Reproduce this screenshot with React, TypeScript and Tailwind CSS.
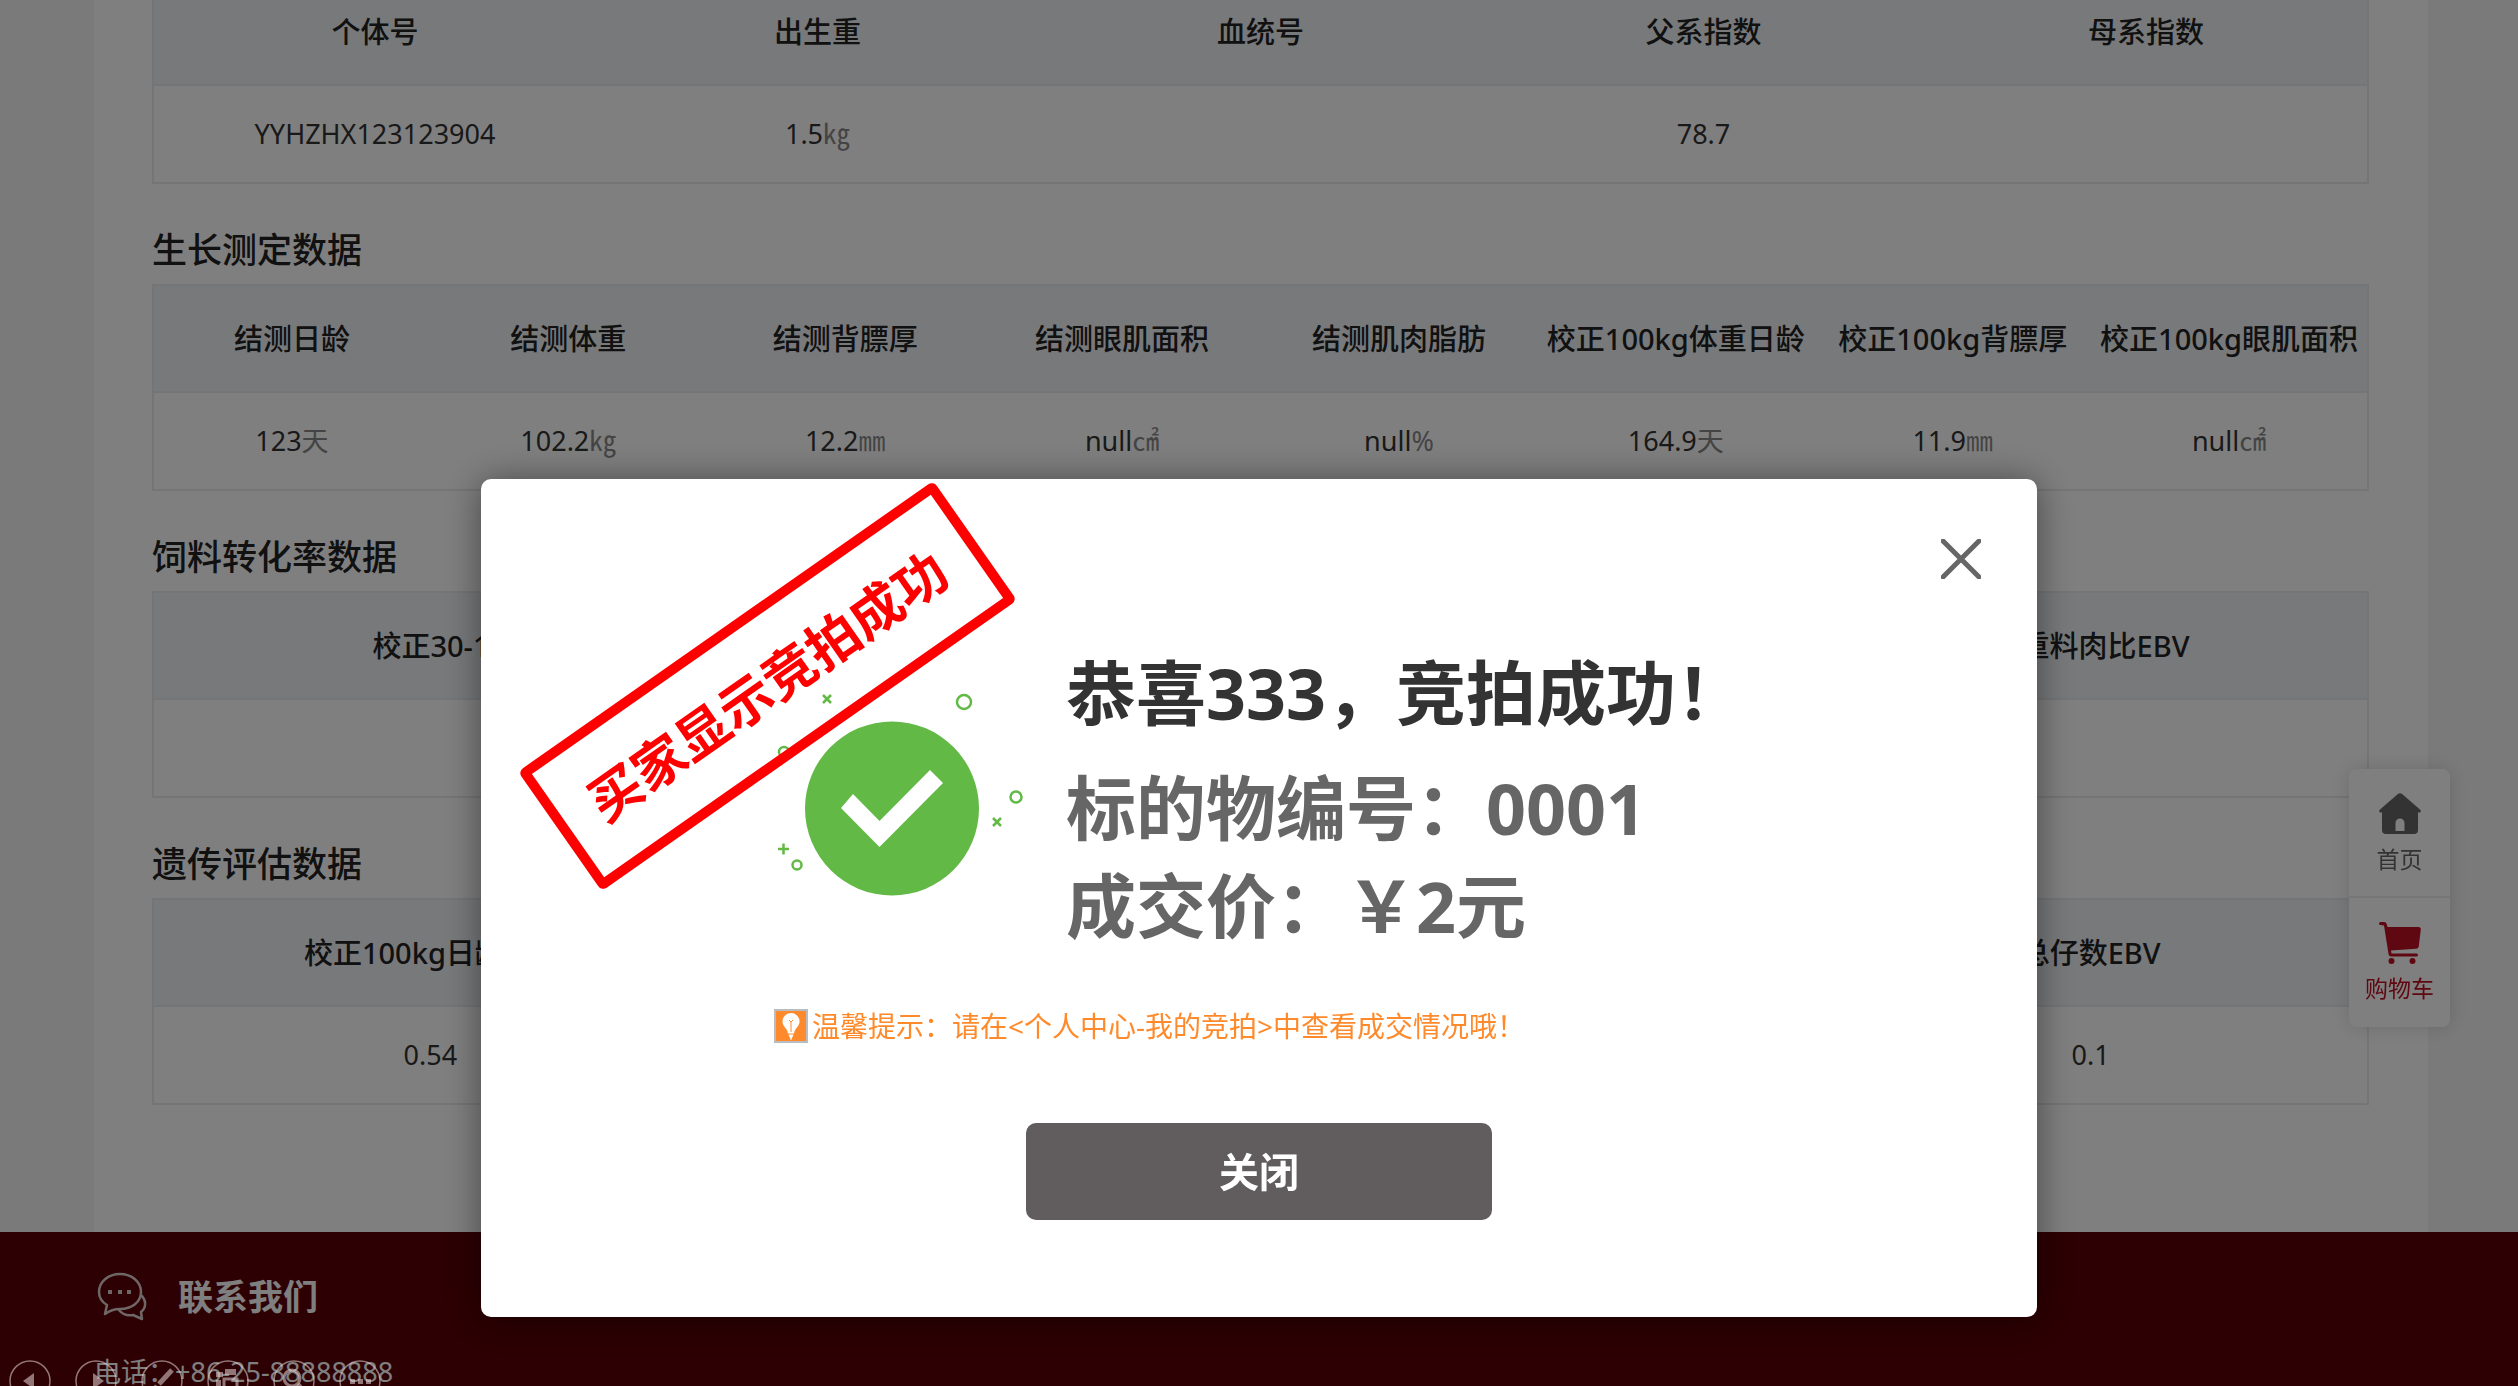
import { useState } from "react";

type Cell = { value: string; unit?: string };

type DataTable = {
  title?: string;
  headers: string[];
  cells: Cell[];
};

const tables: DataTable[] = [
  {
    headers: ["个体号", "出生重", "血统号", "父系指数", "母系指数"],
    cells: [
      { value: "YYHZHX123123904" },
      { value: "1.5", unit: "㎏" },
      { value: "" },
      { value: "78.7" },
      { value: "" },
    ],
  },
  {
    title: "生长测定数据",
    headers: [
      "结测日龄",
      "结测体重",
      "结测背膘厚",
      "结测眼肌面积",
      "结测肌肉脂肪",
      "校正100kg体重日龄",
      "校正100kg背膘厚",
      "校正100kg眼肌面积",
    ],
    cells: [
      { value: "123", unit: "天" },
      { value: "102.2", unit: "㎏" },
      { value: "12.2", unit: "㎜" },
      { value: "null", unit: "㎠" },
      { value: "null", unit: "%" },
      { value: "164.9", unit: "天" },
      { value: "11.9", unit: "㎜" },
      { value: "null", unit: "㎠" },
    ],
  },
  {
    title: "饲料转化率数据",
    headers: ["校正30-100kg体重料比", "料肉比", "校正30-100kg体重料肉比EBV"],
    cells: [{ value: "" }, { value: "" }, { value: "" }],
  },
  {
    title: "遗传评估数据",
    headers: ["校正100kg日龄EBV", "背膘厚EBV", "眼肌面积EBV", "总仔数EBV"],
    cells: [{ value: "0.54" }, { value: "" }, { value: "" }, { value: "0.1" }],
  },
];

function DataSection({ title, headers, cells }: DataTable) {
  return (
    <section>
      {title && (
        <h2 className="h-[100px] pt-10 text-[35px] leading-[52px] font-medium text-[#222]">{title}</h2>
      )}
      <table className="w-full table-fixed border-collapse border-2 border-[#e7eaec] text-center text-[#333]">
        <thead className="bg-[#f0f3f7] text-[29px] text-[#222]">
          <tr className="h-[107px] border-b-2 border-[#e7eaec]">
            {headers.map((h) => (
              <th key={h} className="font-medium whitespace-nowrap">{h}</th>
            ))}
          </tr>
        </thead>
        <tbody className="text-[27px]">
          <tr className="h-[98px]">
            {cells.map((c, i) => (
              <td key={i}>
                {c.value}
                {c.unit && <span className="text-[#888]">{c.unit}</span>}
              </td>
            ))}
          </tr>
        </tbody>
      </table>
    </section>
  );
}

function SideNav() {
  return (
    <nav className="fixed top-[769px] right-[68px] w-[101px] rounded-lg bg-white text-[23px] leading-6 shadow-[0_0_20px_rgba(0,0,0,0.15)]">
      <a href="#home" className="flex h-[129px] flex-col items-center gap-3 border-b-2 border-[#ececec] pt-6 text-[#666]">
        <svg viewBox="0 0 42 42" className="size-[42px]" fill="currentColor">
          <path d="M18.6 1.2a3.6 3.6 0 0 1 4.8 0L41 16.4c1.6 1.5.7 3.2-1.2 3.2H39V37a4 4 0 0 1-4 4H7a4 4 0 0 1-4-4V19.600H2.200C.3 19.600-.6 17.900 1 16.400ZM16.500 38h9V30a4.500 4.500 0 0 0-9 0Z" fillRule="evenodd" />
        </svg>
        首页
      </a>
      <a href="#cart" className="flex h-[129px] flex-col items-center gap-3 pt-6 text-[#c01122]">
        <svg viewBox="0 0 42 42" className="size-[42px]" fill="currentColor">
          <path d="M1.500 0H5a3 3 0 0 1 2.800 2.200L8.500 5H39.500c1.600 0 2.500 1 2.300 2.500L39.800 24c-.2 1.600-1.200 2.600-2.800 2.800L12 28.500l.5 3H37.500a1.500 1.500 0 0 1 0 3H12a2.500 2.500 0 0 1-2.400-2L5 3.500 1.500 3a1.500 1.500 0 0 1 0-3Z" />
          <circle cx="12.500" cy="39" r="3" />
          <circle cx="33.500" cy="39" r="3" />
        </svg>
        购物车
      </a>
    </nav>
  );
}

function Footer() {
  return (
    <footer className="h-[300px] bg-[#5a0006] pt-[34px] pl-[94px] text-white">
      <div className="flex items-center gap-7">
        <svg viewBox="0 0 56 52" className="h-[52px] w-14" fill="none" stroke="currentColor" strokeWidth="2.500" strokeLinejoin="round" opacity="0.8">
          <path d="M11 43l2-9C8 31 5 26 5 21 5 11 14 3 26 3s21 8 21 18-9 17-21 17c-5 0-11 2-15 5Z" />
          <path d="M47 24c6 6 5 13 0 17l1 7-9-4c-5 1-11-1-15-6" />
          <path d="M16 19v4M26 19v4M35 19v4" strokeWidth="4" />
        </svg>
        <h3 className="text-[35px] leading-[62px] font-bold">联系我们</h3>
      </div>
      <p className="pt-4 text-[27px] leading-[56px]">电话：+86-25-88888888</p>
    </footer>
  );
}

const slideTools = [
  { label: "上一张", icon: <path d="M14 21l11-8v16z" fill="currentColor" /> },
  { label: "下一张", icon: <path d="M29 21l-11-8v16z" fill="currentColor" /> },
  { label: "画笔", icon: <path d="M31 10L18 24M16 26l-4 5" stroke="currentColor" strokeWidth="5" /> },
  {
    label: "所有幻灯片",
    icon: (
      <>
        <path d="M9 12h7v5H9zM18 9h11v6H18zM9 20h5v10H9z" fill="currentColor" />
        <path d="M17 19h13v12H17z" fill="none" stroke="currentColor" strokeWidth="3" />
      </>
    ),
  },
  {
    label: "放大",
    icon: (
      <>
        <circle cx="19" cy="18" r="8" fill="none" stroke="currentColor" strokeWidth="3" />
        <path d="M25 24l7 8" stroke="currentColor" strokeWidth="4" />
      </>
    ),
  },
  {
    label: "更多",
    icon: <path d="M11 19h5v5h-5zM19 19h5v5h-5zM27 19h5v5h-5z" fill="currentColor" />,
  },
];

function SlideToolbar() {
  return (
    <div className="fixed -bottom-4 left-[9px] flex gap-6 text-[#e8d8d8]/55">
      {slideTools.map((t) => (
        <button key={t.label} aria-label={t.label} className="size-[42px]">
          <svg viewBox="0 0 42 42">
            <circle cx="21" cy="21" r="20" fill="none" stroke="currentColor" strokeWidth="1.500" />
            {t.icon}
          </svg>
        </button>
      ))}
    </div>
  );
}

function SuccessMark() {
  return (
    <svg viewBox="0 0 248 208" className="mt-[46px] h-[208px] w-[248px]" fill="none" stroke="#62b946" strokeWidth="2.500">
      <circle cx="116" cy="118.500" r="87" fill="#62b946" stroke="none" />
      <path d="M65 118l12-14 26.500 27L154 80l13 13-63.500 64z" fill="#fff" stroke="none" />
      <circle cx="188" cy="12" r="7" />
      <circle cx="240" cy="107" r="5.500" />
      <circle cx="21" cy="175" r="4.500" />
      <circle cx="8" cy="62" r="5" />
      <path d="M47 5l8 8M55 5l-8 8M217 128l8 8M225 128l-8 8M2 159h11M7.500 153.500v11" />
    </svg>
  );
}

function ResultDialog({ onClose }: { onClose: () => void }) {
  return (
    <div
      role="dialog"
      aria-modal="true"
      className="relative mx-auto mt-[479px] w-[1556px] rounded-[10px] bg-white pt-[165px] pb-[97px] pl-[295px] shadow-[0_2px_36px_rgba(0,0,0,0.45)]"
    >
      <button aria-label="关闭窗口" onClick={onClose} className="absolute top-[60px] right-14 text-[#666]">
        <svg viewBox="0 0 40 40" className="size-10" stroke="currentColor" strokeWidth="5" strokeLinecap="round">
          <path d="M2 2l36 36M38 2L2 38" />
        </svg>
      </button>

      <div className="flex items-start gap-[42px]">
        <SuccessMark />
        <div className="text-[70px] leading-[98px] font-bold text-[#666]">
          <h1 className="mb-[17px] text-[#333]">恭喜333，竞拍成功！</h1>
          <p>标的物编号：0001</p>
          <p>成交价：￥2元</p>
        </div>
      </div>

      <p className="mt-[51px] -ml-0.5 flex items-center gap-1 text-[28px] leading-10 text-[#ff8a2b]">
        <svg viewBox="0 0 34 34" className="size-[34px]">
          <rect x="1" y="1" width="32" height="32" fill="#ff8a2b" stroke="#b9bcc0" strokeWidth="2" />
          <path d="M17 4a8.500 8.500 0 0 0-8.500 8.500c0 5 4.500 6 5.500 12h6c1-6 5.500-7 5.500-12A8.500 8.500 0 0 0 17 4ZM14.500 25.500h5L17 31.500z" fill="#fff" />
          <path d="M15 11l2 2 2-2M17 13v10" stroke="#ff8a2b" fill="none" />
        </svg>
        温馨提示：请在&lt;个人中心-我的竞拍&gt;中查看成交情况哦！
      </p>

      <button
        onClick={onClose}
        className="mt-[77px] ml-[250px] block h-[97px] w-[466px] rounded-[10px] bg-[#615d5e] text-[40px] font-bold text-white"
      >
        关闭
      </button>

      {/* Rotated stamp over the corner of the dialog */}
      <div className="absolute top-[134px] left-[33px] flex h-[146px] w-[507px] -rotate-35 items-center justify-center rounded-md border-10 border-[#f00] text-[53px] font-bold text-[#f00]">
        买家显示竞拍成功
      </div>
    </div>
  );
}

export default function App() {
  const [open, setOpen] = useState(true);

  return (
    <div lang="zh-CN" className="h-screen overflow-hidden bg-[#f4f4f4] font-['Noto_Sans','Noto_Sans_CJK_SC',sans-serif]">
      <main className="mr-[90px] ml-[94px] bg-white pr-[59px] pb-[127px] pl-[58px]">
        <div className="-mt-[23px]">
          {tables.map((t) => (
            <DataSection key={t.headers[0]} {...t} />
          ))}
        </div>
      </main>
      <Footer />
      <SideNav />
      {open && (
        <div className="fixed inset-0 bg-black/50">
          <ResultDialog onClose={() => setOpen(false)} />
        </div>
      )}
      <SlideToolbar />
    </div>
  );
}
